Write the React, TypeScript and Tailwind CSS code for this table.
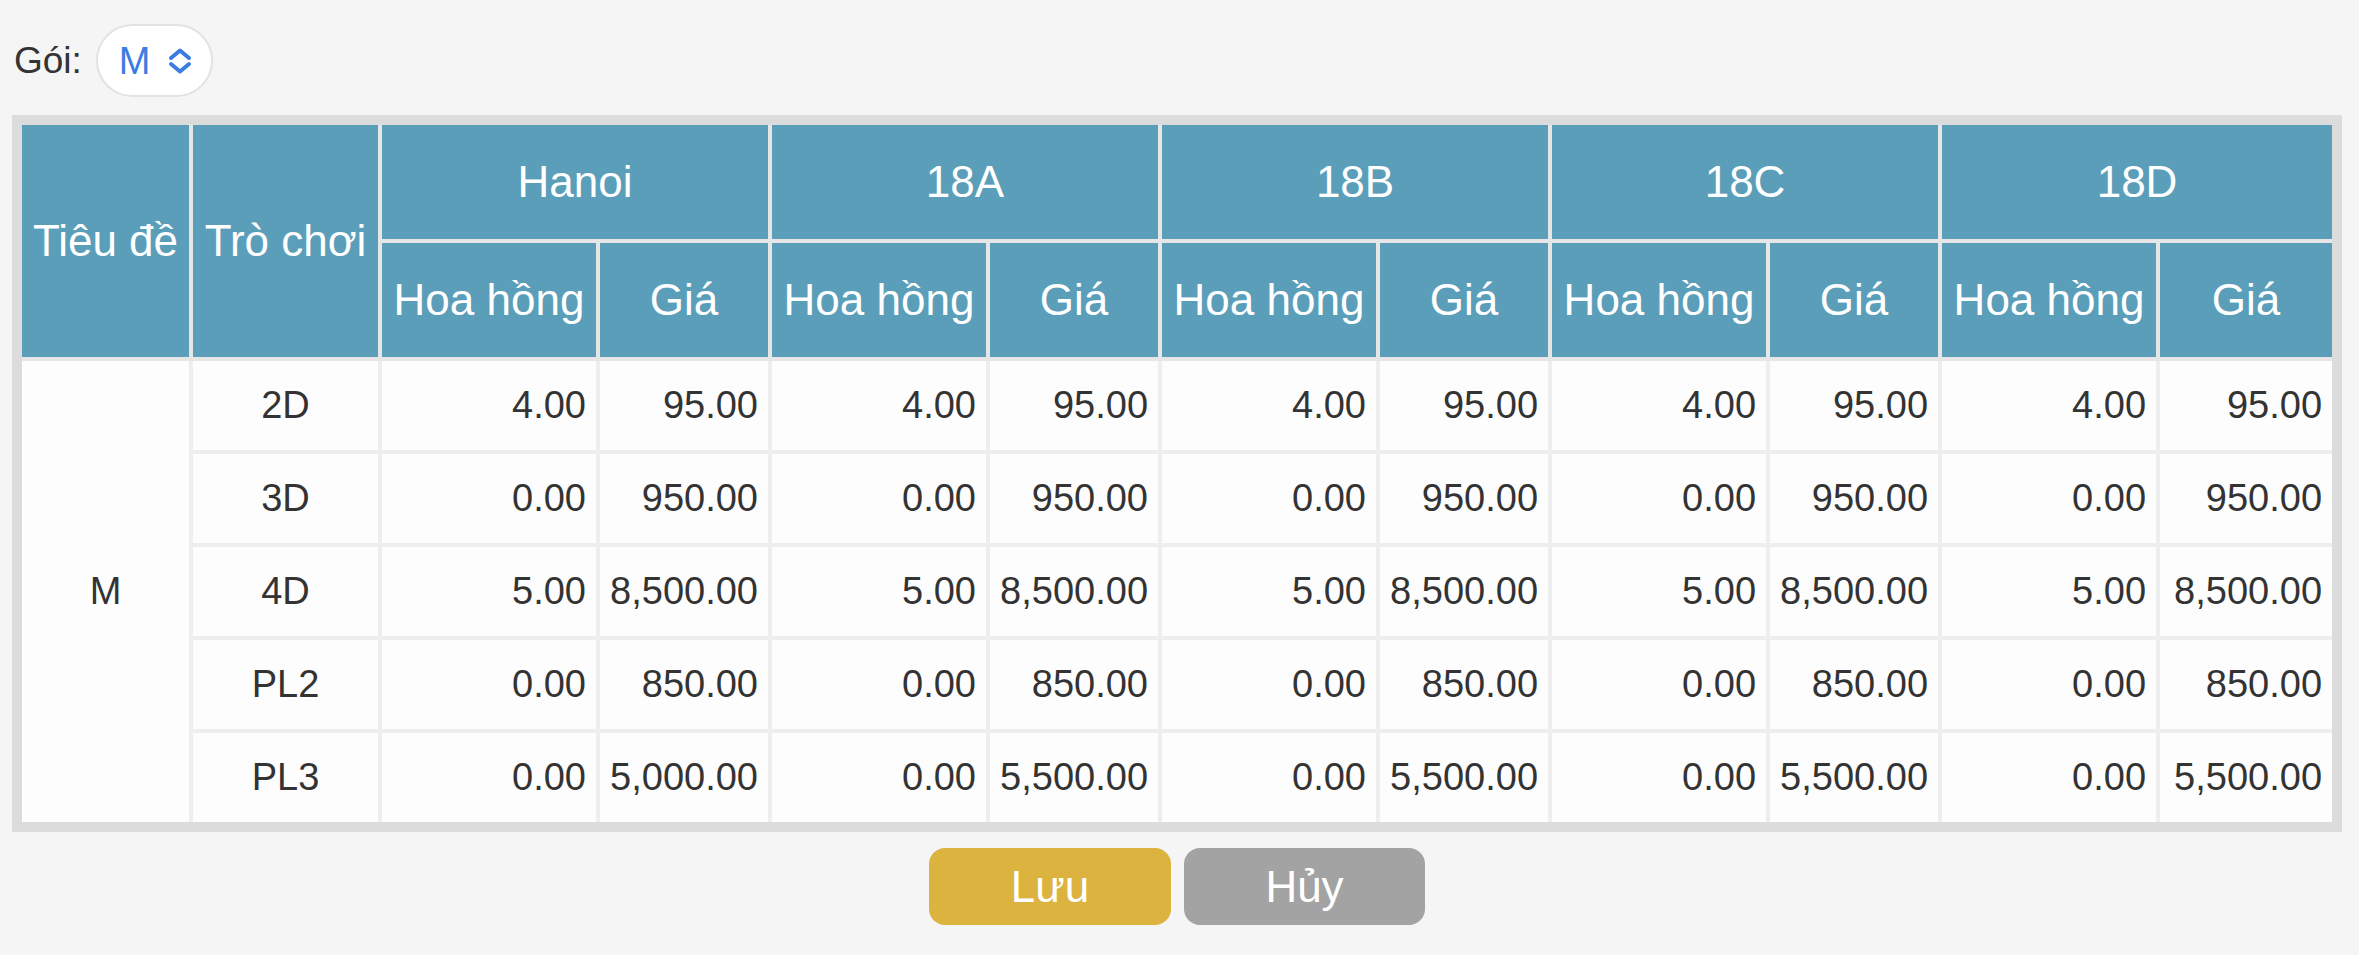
import React from "react";

const groups = ["Hanoi", "18A", "18B", "18C", "18D"];
const rows = [
  { game: "2D", vals: [["4.00", "95.00"], ["4.00", "95.00"], ["4.00", "95.00"], ["4.00", "95.00"], ["4.00", "95.00"]] },
  { game: "3D", vals: [["0.00", "950.00"], ["0.00", "950.00"], ["0.00", "950.00"], ["0.00", "950.00"], ["0.00", "950.00"]] },
  { game: "4D", vals: [["5.00", "8,500.00"], ["5.00", "8,500.00"], ["5.00", "8,500.00"], ["5.00", "8,500.00"], ["5.00", "8,500.00"]] },
  { game: "PL2", vals: [["0.00", "850.00"], ["0.00", "850.00"], ["0.00", "850.00"], ["0.00", "850.00"], ["0.00", "850.00"]] },
  { game: "PL3", vals: [["0.00", "5,000.00"], ["0.00", "5,500.00"], ["0.00", "5,500.00"], ["0.00", "5,500.00"], ["0.00", "5,500.00"]] },
];

function Chevrons() {
  return (
    <svg width="26" height="28" viewBox="0 0 26 28" fill="none" stroke="#3b7de0" strokeWidth="4" strokeLinecap="round" strokeLinejoin="round">
      <path d="M4 11 L13 3.5 L22 11" />
      <path d="M4 17 L13 24.5 L22 17" />
    </svg>
  );
}

export default function App() {
  return (
    <div className="min-h-screen w-full bg-[#f5f5f5] font-['Liberation_Sans',Arial,sans-serif] text-[#333]">
      <div className="pl-[12px] pt-[24px]">
        <div className="flex items-center pl-[2px]">
          <span className="text-[37px] leading-none text-[#333]">Gói:</span>
          <div className="ml-[14px] flex h-[73px] w-[117px] items-center rounded-full border-2 border-[#e2e2e2] bg-white pl-[21px] pr-[18px]">
            <span className="text-[38px] leading-none text-[#3b7de0]">M</span>
            <span className="ml-[16px] flex items-center">
              <Chevrons />
            </span>
          </div>
        </div>

        <div className="mt-[18px] w-[2330px] bg-[#dcdcdc] p-[10px]">
          <table className="w-[2310px] table-fixed border-separate border-spacing-0">
            <colgroup>
              <col className="w-[171px]" />
              <col className="w-[189px]" />
              {groups.map((g) => (
                <React.Fragment key={g}>
                  <col className="w-[218px]" />
                  <col className="w-[172px]" />
                </React.Fragment>
              ))}
            </colgroup>
            <thead>
              <tr className="h-[118px]">
                <th rowSpan={2} className="border-r-4 border-b-4 border-[#e6e6e6] bg-[#5b9eb9] text-center text-[44px] font-normal whitespace-nowrap text-white">
                  Tiêu đề
                </th>
                <th rowSpan={2} className="border-r-4 border-b-4 border-[#e6e6e6] bg-[#5b9eb9] text-center text-[44px] font-normal whitespace-nowrap text-white">
                  Trò chơi
                </th>
                {groups.map((g, i) => (
                  <th
                    key={g}
                    colSpan={2}
                    className={`${i < groups.length - 1 ? "border-r-4" : ""} border-b-4 border-[#e6e6e6] bg-[#5b9eb9] text-center text-[44px] font-normal whitespace-nowrap text-white`}
                  >
                    {g}
                  </th>
                ))}
              </tr>
              <tr className="h-[118px]">
                {groups.map((g, i) => (
                  <React.Fragment key={g}>
                    <th className="border-r-4 border-b-4 border-[#e6e6e6] bg-[#5b9eb9] text-center text-[44px] font-normal whitespace-nowrap text-white">
                      Hoa hồng
                    </th>
                    <th
                      className={`${i < groups.length - 1 ? "border-r-4" : ""} border-b-4 border-[#e6e6e6] bg-[#5b9eb9] text-center text-[44px] font-normal whitespace-nowrap text-white`}
                    >
                      Giá
                    </th>
                  </React.Fragment>
                ))}
              </tr>
            </thead>
            <tbody>
              {rows.map((r, ri) => {
                const last = ri === rows.length - 1;
                const bb = last ? "" : "border-b-4";
                return (
                  <tr key={r.game} className={last ? "h-[89px]" : "h-[93px]"}>
                    {ri === 0 && (
                      <td rowSpan={rows.length} className="border-r-4 border-[#eeeeee] bg-[#fdfdfd] text-center text-[38px] text-[#333]">
                        M
                      </td>
                    )}
                    <td className={`${bb} border-r-4 border-[#eeeeee] bg-[#fdfdfd] text-center text-[38px] text-[#333]`}>
                      {r.game}
                    </td>
                    {r.vals.map((v, vi) => (
                      <React.Fragment key={vi}>
                        <td className={`${bb} border-r-4 border-[#eeeeee] bg-[#fdfdfd] pr-[10px] text-right text-[38px] whitespace-nowrap text-[#333]`}>
                          {v[0]}
                        </td>
                        <td
                          className={`${bb} ${vi < r.vals.length - 1 ? "border-r-4" : ""} border-[#eeeeee] bg-[#fdfdfd] pr-[10px] text-right text-[38px] whitespace-nowrap text-[#333]`}
                        >
                          {v[1]}
                        </td>
                      </React.Fragment>
                    ))}
                  </tr>
                );
              })}
            </tbody>
          </table>
        </div>

        <div className="mt-[16px] flex w-[2330px] justify-center gap-[13px]">
          <button className="flex h-[77px] w-[242px] items-center justify-center rounded-[16px] bg-[#dcb33f] text-[44px] leading-none text-white">
            Lưu
          </button>
          <button className="flex h-[77px] w-[241px] items-center justify-center rounded-[16px] bg-[#a3a3a3] text-[44px] leading-none text-white">
            Hủy
          </button>
        </div>
      </div>
    </div>
  );
}
